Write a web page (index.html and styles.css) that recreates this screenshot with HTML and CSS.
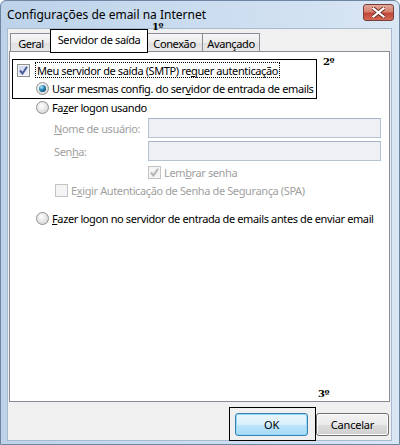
FILE: index.html
```html
<!DOCTYPE html>
<html lang="pt-BR">
<head>
  <meta charset="UTF-8">
  <meta name="viewport" content="width=device-width, initial-scale=1.0">
  <title>Configurações de email na Internet</title>
  <link rel="stylesheet" href="styles.css">
</head>
<body>
  <div class="window">
    <div class="titlebar">
      <span class="title">Configurações de email na Internet</span>
      <span class="close">
        <svg width="13" height="11" viewBox="0 0 13 11">
          <path d="M1.5 1.5 L11.5 9.5 M11.5 1.5 L1.5 9.5" stroke="#6b2a22" stroke-width="4" stroke-linecap="square"/>
          <path d="M1.5 1.5 L11.5 9.5 M11.5 1.5 L1.5 9.5" stroke="#fff" stroke-width="2.2" stroke-linecap="square"/>
        </svg>
      </span>
    </div>

    <div class="client">
      <div class="tabs">
        <div class="tab tab-geral">Geral</div>
        <div class="tab tab-active">Servidor de saída</div>
        <div class="tab tab-conexao">Conexão</div>
        <div class="tab tab-avancado">Avançado</div>
      </div>

      <div class="panel">
        <div class="row row-smtp">
          <span class="check checked">
            <svg width="9" height="9" viewBox="0 0 9 9"><path d="M1 4.5 L3.5 7.5 L8 0.8" fill="none" stroke="#4a5d9c" stroke-width="2"/></svg>
          </span>
          <span class="focus">Meu servidor de saída (SMTP) re<u>q</u>uer autenticação</span>
        </div>
        <div class="row indent">
          <span class="radio selected"></span>
          <span>Usar mesmas config. do ser<u>v</u>idor de entrada de emails</span>
        </div>
        <div class="row indent row-logon">
          <span class="radio"></span>
          <span>Fa<u>z</u>er logon usando</span>
        </div>
        <div class="field-row disabled">
          <span class="field-label"><u>N</u>ome de usuário:</span>
          <span class="textbox"></span>
        </div>
        <div class="field-row disabled field-pass">
          <span class="field-label">Sen<u>h</u>a:</span>
          <span class="textbox"></span>
        </div>
        <div class="row disabled row-remember">
          <span class="check checked off">
            <svg width="9" height="9" viewBox="0 0 9 9"><path d="M1 4.5 L3.5 7.5 L8 0.8" fill="none" stroke="#b4b4b4" stroke-width="2"/></svg>
          </span>
          <span>Lem<u>b</u>rar senha</span>
        </div>
        <div class="row disabled row-spa">
          <span class="check off"></span>
          <span>E<u>x</u>igir Autenticação de Senha de Segurança (SPA)</span>
        </div>
        <div class="row indent row-before">
          <span class="radio"></span>
          <span><u>F</u>azer logon no servidor de entrada de emails antes de enviar email</span>
        </div>
      </div>

      <div class="buttons">
        <button class="btn btn-default">OK</button>
        <button class="btn">Cancelar</button>
      </div>
    </div>

    <!-- annotation boxes drawn over the dialog -->
    <div class="mark mark-1"></div>
    <span class="mark-label label-1">1º</span>
    <div class="mark mark-2"></div>
    <span class="mark-label label-2">2º</span>
    <div class="mark mark-3"></div>
    <span class="mark-label label-3">3º</span>
  </div>
</body>
</html>
```

FILE: styles.css
```css
* {
  box-sizing: border-box;
}
body {
  margin: 0;
  padding: 0;
  background: #ffffff;
  font-family: "Noto Sans", "Open Sans", sans-serif;
  font-size: 11px;
  letter-spacing: -0.38px;
  white-space: nowrap;
  color: #000;
}
.window {
  position: relative;
  width: 400px;
  height: 445px;
  border: 1px solid #6f86a3;
  border-radius: 6px 6px 0 0;
  background: linear-gradient(to right, #bdd3ea, #cddef0 60%, #d9e6f4);
  padding: 0 7px 3px 6px;
  display: flex;
  flex-direction: column;
}
.titlebar {
  height: 27px;
  display: flex;
  align-items: center;
  justify-content: space-between;
  margin-right: -2px;
}
.title {
  font-size: 12px;
  letter-spacing: 0;
  margin-top: -1px;
}
.close {
  width: 31px;
  height: 17px;
  margin-top: -4px;
  border: 1px solid #7a3f3a;
  border-radius: 3px;
  background: linear-gradient(#e4a898, #d7806e 45%, #c1463a 55%, #d26a55);
  display: flex;
  align-items: center;
  justify-content: center;
}
.client {
  flex: 1;
  border: 1px solid #a8bad0;
  background: #f0f0f0;
  padding: 0 1px;
  display: flex;
  flex-direction: column;
}
.tabs {
  display: flex;
  align-items: flex-end;
  height: 22px;
  padding-left: 1px;
}
.tab {
  height: 18px;
  border: 1px solid #898c95;
  border-bottom: none;
  background: linear-gradient(#f6f6f6, #ececec 50%, #dfdfdf 51%, #e8e8e8);
  display: flex;
  align-items: center;
  justify-content: center;
  padding-top: 1px;
}
.tab-geral {
  width: 42px;
}
.tab-active {
  position: relative;
  z-index: 2;
  width: 98px;
  height: 23px;
  margin-left: -2px;
  margin-bottom: -1px;
  background: #fff;
  padding-top: 0;
  padding-bottom: 3px;
}
.tab-conexao {
  width: 57px;
  margin-left: -2px;
}
.tab-avancado {
  width: 58px;
  margin-left: -1px;
}
.panel {
  height: 351px;
  border: 1px solid #898c95;
  background: #fff;
  padding: 9px 8px 0 7px;
}
.row {
  height: 18px;
  display: flex;
  align-items: center;
}
.indent {
  padding-left: 19px;
}
.row-logon {
  margin-top: 1px;
}
.row-remember {
  margin-top: 2px;
  padding-left: 131px;
}
.row-spa {
  padding-left: 38px;
}
.row-before {
  margin-top: 10px;
}
.disabled {
  color: #a0a0a0;
}
.check {
  width: 13px;
  height: 13px;
  border: 1px solid #8e8f8f;
  background: linear-gradient(135deg, #dcdcdc, #fafafa);
  box-shadow: inset 0 0 0 1px #f4f4f4;
  display: flex;
  align-items: center;
  justify-content: center;
  margin-right: 3px;
  flex: none;
}
.check.checked {
  background: linear-gradient(135deg, #c9d1ea, #f4f6fc);
}
.check.off {
  border-color: #c4c4c4;
  background: #f4f4f4;
}
.radio {
  width: 13px;
  height: 13px;
  border-radius: 50%;
  border: 1px solid #8e8f8f;
  background: radial-gradient(circle at 40% 35%, #ffffff, #dcdcdc 70%, #c8c8c8);
  margin-right: 3px;
  flex: none;
  display: flex;
  align-items: center;
  justify-content: center;
}
.radio.selected::after {
  content: "";
  width: 7px;
  height: 7px;
  border-radius: 50%;
  background: radial-gradient(circle at 35% 30%, #bdeaff, #2a8cbf 40%, #0c4a6e 80%);
}
.focus {
  margin-left: 2px;
  height: 16px;
  padding: 0 1px;
  border: 1px dotted #000;
  display: flex;
  align-items: center;
}
.field-row {
  height: 20px;
  margin-top: 2px;
  padding-left: 37px;
  display: flex;
  align-items: center;
}
.field-pass {
  margin-top: 3px;
}
.field-label {
  width: 94px;
  flex: none;
}
.textbox {
  width: 233px;
  height: 20px;
  border: 1px solid #b2c3d4;
  border-top-color: #a3b4c6;
  background: #eef0f3;
}
.buttons {
  display: flex;
  justify-content: flex-end;
  gap: 8px;
  margin-top: 11px;
  padding-right: 1px;
}
.btn {
  width: 73px;
  height: 23px;
  font-family: inherit;
  font-size: 11px;
  letter-spacing: -0.2px;
  color: #000;
  border: 1px solid #707070;
  border-radius: 3px;
  background: linear-gradient(#f2f2f2, #ebebeb 50%, #dddddd 51%, #cfcfcf);
  box-shadow: inset 0 0 0 1px #fcfcfc;
  padding: 0;
}
.btn-default {
  border-color: #3c7fb1;
  background: linear-gradient(#eaf6fd, #d9f0fc 50%, #bee6fd 51%, #a7d9f5);
  box-shadow: inset 0 0 0 1px #8fdcf8;
}
.mark {
  position: absolute;
  border: 1px solid #000;
  z-index: 5;
}
.mark-1 {
  left: 49px;
  top: 28px;
  width: 98px;
  height: 24px;
}
.mark-2 {
  left: 11px;
  top: 58px;
  width: 305px;
  height: 40px;
}
.mark-3 {
  left: 228px;
  top: 406px;
  width: 87px;
  height: 34px;
}
.mark-label {
  position: absolute;
  z-index: 5;
  font-family: "DejaVu Serif", serif;
  font-weight: bold;
  font-size: 10px;
  line-height: 10px;
  letter-spacing: -0.5px;
}
.label-1 {
  left: 151px;
  top: 21px;
}
.label-2 {
  left: 322px;
  top: 56px;
}
.label-3 {
  left: 317px;
  top: 388px;
}
```
